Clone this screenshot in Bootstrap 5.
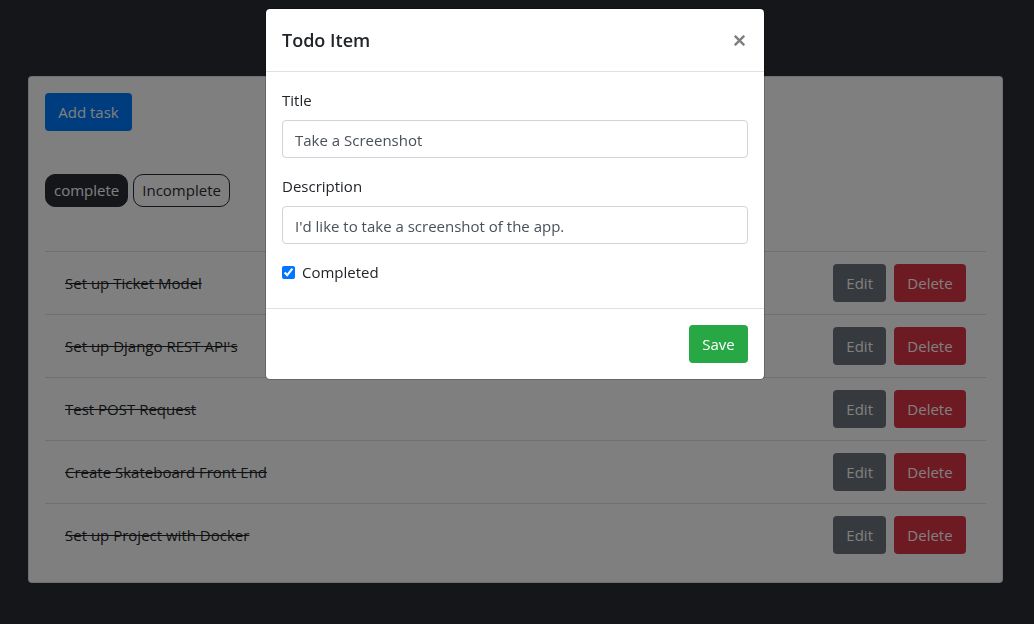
<!DOCTYPE html>
<html lang="en">
<head>
<meta charset="utf-8">
<meta name="viewport" content="width=device-width, initial-scale=1">
<title>Todo App</title>
<link rel="stylesheet" href="https://cdn.jsdelivr.net/npm/bootstrap@5.3.0/dist/css/bootstrap.min.css">
<style>
  body { background: #2b2c33; color: #212529; font-family: "Open Sans", "Noto Sans", sans-serif; font-size: 15px; line-height: 24px; }
  .page { padding: 76px 31px 0 28px; }
  .board { border-color: rgba(0,0,0,.125); border-radius: 4px; }
  .btn, .form-control { font-size: 15px; line-height: 24px; border-radius: 4px; padding: 6px 12px; color: #fff; }
  .form-control { color: #495057; border-color: #ced4da; padding: 7px 12px 5px; }
  .btn-add, .btn-add:hover { background: #007bff; color: #fff; min-width: 87px; }
  .btn-edit, .btn-edit:hover { background: #6c757d; color: #fff; }
  .btn-del, .btn-del:hover { background: #dc3545; color: #fff; min-width: 72px; }
  .btn-save, .btn-save:hover { background: #28a745; color: #fff; min-width: 59px; }
  .filter { background: transparent; border: 1px solid #2b2c33; border-radius: 10px; padding: 4px 8px; height: 33px; line-height: 23px; color: #2b2c33; }
  .filter.on { background: #2b2c33; color: #fff; }
  .filters { margin: 43px 0 44px; gap: 5px; }
  .task { border-top: 1px solid rgba(0,0,0,.125); padding: 12px 20px; color: #212529; }
  .task span { text-decoration: line-through; }
  .shade { opacity: .5; }
  .modal-dialog { margin: 8px auto; }
  .modal-content { border: 1px solid rgba(0,0,0,.2); border-radius: 5px; --bs-modal-bg: #fff; color: #212529; }
  .modal-header, .modal-footer { border-color: #dee2e6; padding: 16px; }
  .modal-title { font-size: 18px; line-height: 30px; font-weight: 600; }
  .close-x { border: 0; background: none; padding: 0; width: 17px; height: 17px; color: #7f7f7f; display: flex; align-items: center; justify-content: center; }
  .modal-footer > .btn { margin: 0; }
  .tick { width: 13px; height: 13px; margin: 0; accent-color: #0075ff; }
  .tick + label { margin-left: 7px; }
</style>
</head>
<body>
<main class="page">
  <div class="card board p-3">
    <div class="d-flex"><button type="button" class="btn btn-add">Add task</button></div>
    <div class="filters d-flex">
      <button type="button" class="filter on">complete</button>
      <button type="button" class="filter">Incomplete</button>
    </div>
    <ul class="list-unstyled mb-0">
      <li class="task d-flex align-items-center justify-content-between"><span>Set up Ticket Model</span><div class="d-flex gap-2"><button type="button" class="btn btn-edit">Edit</button><button type="button" class="btn btn-del">Delete</button></div></li>
      <li class="task d-flex align-items-center justify-content-between"><span>Set up Django REST API's</span><div class="d-flex gap-2"><button type="button" class="btn btn-edit">Edit</button><button type="button" class="btn btn-del">Delete</button></div></li>
      <li class="task d-flex align-items-center justify-content-between"><span>Test POST Request</span><div class="d-flex gap-2"><button type="button" class="btn btn-edit">Edit</button><button type="button" class="btn btn-del">Delete</button></div></li>
      <li class="task d-flex align-items-center justify-content-between"><span>Create Skateboard Front End</span><div class="d-flex gap-2"><button type="button" class="btn btn-edit">Edit</button><button type="button" class="btn btn-del">Delete</button></div></li>
      <li class="task d-flex align-items-center justify-content-between"><span>Set up Project with Docker</span><div class="d-flex gap-2"><button type="button" class="btn btn-edit">Edit</button><button type="button" class="btn btn-del">Delete</button></div></li>
    </ul>
  </div>
</main>
<div class="modal-backdrop shade"></div>
<div class="modal d-block pe-1" tabindex="-1" role="dialog" aria-modal="true" aria-labelledby="dlgTitle">
  <div class="modal-dialog">
    <form class="modal-content">
      <div class="modal-header">
        <h5 class="modal-title" id="dlgTitle">Todo Item</h5>
        <button type="button" class="close-x" aria-label="Close"><svg width="11" height="11" viewBox="0 0 11 11" fill="none" stroke="currentColor" stroke-width="2.4"><path d="M.8.8l9.4 9.4M10.2.8L.8 10.2"/></svg></button>
      </div>
      <div class="modal-body p-3">
        <div class="mb-3"><label class="mb-2" for="ttl">Title</label><input type="text" class="form-control" id="ttl" value="Take a Screenshot"></div>
        <div class="mb-3"><label class="mb-2" for="dsc">Description</label><input type="text" class="form-control" id="dsc" value="I'd like to take a screenshot of the app."></div>
        <div class="mb-2 d-flex align-items-center"><input type="checkbox" class="tick" id="done" checked><label for="done">Completed</label></div>
      </div>
      <div class="modal-footer"><button type="button" class="btn btn-save">Save</button></div>
    </form>
  </div>
</div>
<script src="https://cdn.jsdelivr.net/npm/bootstrap@5.3.0/dist/js/bootstrap.bundle.min.js"></script>
</body>
</html>
